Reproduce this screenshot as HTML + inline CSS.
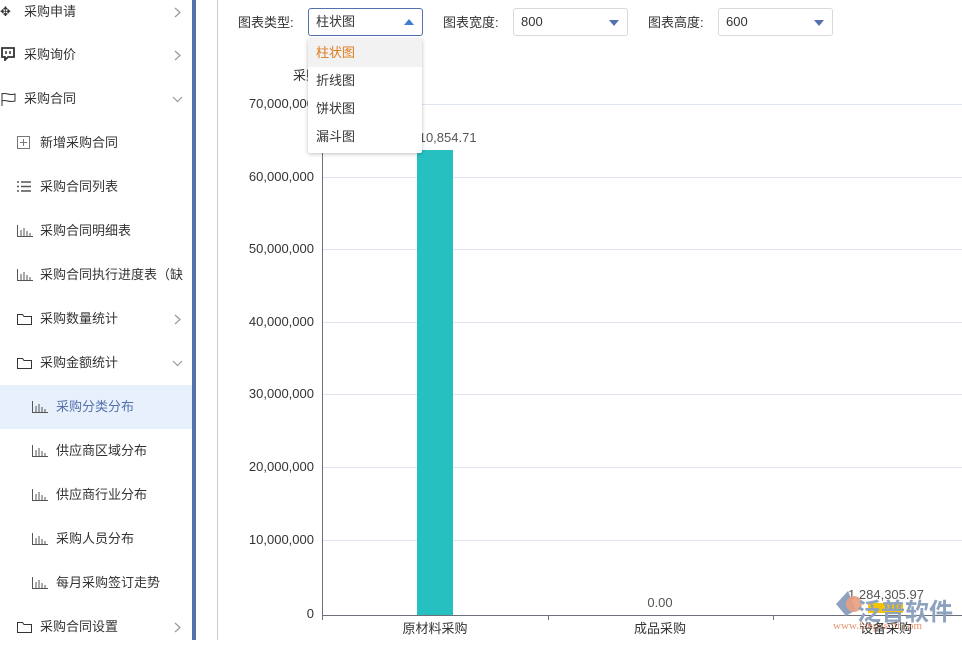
<!DOCTYPE html>
<html><head><meta charset="utf-8"><style>
*{margin:0;padding:0;box-sizing:border-box}
body{width:962px;height:640px;overflow:hidden;background:#fff;font-family:"Liberation Sans","Noto Sans CJK SC",sans-serif;font-size:13px;color:#333;position:relative}
.side{position:absolute;left:0;top:0;width:192px;height:640px;background:#fff}
.bar{position:absolute;left:192px;top:0;width:4px;height:640px;background:#5470ad}
.vline{position:absolute;left:217px;top:0;width:1px;height:640px;background:#c8ccd4}
.it{position:absolute;left:0;width:192px;height:44px;line-height:44px;color:#333;font-size:13px}
.it .ic{position:absolute;top:0}
.it .t{position:absolute;top:0}
.arr{position:absolute;left:174px;top:17px}
.dn{position:absolute;left:172px;top:19px}
.act{background:#e8f0fc;color:#5470ad}
.lab{position:absolute;top:12px;font-size:13px;color:#333}
.sel{position:absolute;top:8px;height:28px;border:1px solid #d9d9d9;border-radius:3px;padding-left:7px;line-height:26px;font-size:13px}
.sel .tri{position:absolute;right:8px;top:11px;width:0;height:0;border-left:5px solid transparent;border-right:5px solid transparent;border-top:6px solid #5470ad}
.dd{position:absolute;left:308px;top:39px;width:114px;height:114px;background:#fff;box-shadow:0 1px 4px rgba(0,0,0,.25);border-radius:2px}
.dd div{height:28px;line-height:28px;padding-left:8px;font-size:13px}
</style></head><body>
<div class="side">
<div class="it" style="top:-10px"><span class="ic" style="left:0">✥</span><span class="t" style="left:24px">采购申请</span><svg class="arr" width="8" height="11"><path d="M1 1l5 4.5L1 10" fill="none" stroke="#999" stroke-width="1.2"/></svg></div>
<div class="it" style="top:33px"><svg class="ic" style="left:1px;top:14px" width="14" height="14"><path d="M1 1h12v9H7l-3 3v-3H1z" fill="none" stroke="#333" stroke-width="1.8"/><path d="M5 4v3M9 4v3" stroke="#333" stroke-width="1.5"/></svg><span class="t" style="left:24px">采购询价</span><svg class="arr" width="8" height="11"><path d="M1 1l5 4.5L1 10" fill="none" stroke="#999" stroke-width="1.2"/></svg></div>
<div class="it" style="top:77px"><svg class="ic" style="left:1px;top:15px" width="16" height="14"><path d="M1 1v13M1 2c4-2 6 2 13 0v7c-7 2-9-2-13 0" fill="none" stroke="#333"/></svg><span class="t" style="left:24px">采购合同</span><svg class="dn" width="11" height="7"><path d="M1 1l4.5 4.5L10 1" fill="none" stroke="#999" stroke-width="1.2"/></svg></div>
<div class="it" style="top:121px"><svg class="ic" style="left:17px;top:15px" width="14" height="14"><rect x=".5" y=".5" width="12" height="12" fill="none" stroke="#777"/><path d="M3 6.5h7M6.5 3v7" stroke="#777"/></svg><span class="t" style="left:40px">新增采购合同</span></div>
<div class="it" style="top:165px"><svg class="ic" style="left:17px;top:16px" width="14" height="12"><path d="M0 1h2M4 1h10M0 5.5h2M4 5.5h10M0 10h2M4 10h10" stroke="#555" stroke-width="1.5"/></svg><span class="t" style="left:40px">采购合同列表</span></div>
<div class="it" style="top:209px"><svg class="ic" style="left:17px;top:16px" width="16" height="12"><path d="M.5 0v11.5H16M4 11V5M7 11V3M10 11V6M13 11V8" stroke="#555" fill="none"/></svg><span class="t" style="left:40px">采购合同明细表</span></div>
<div class="it" style="top:253px"><svg class="ic" style="left:17px;top:16px" width="16" height="12"><path d="M.5 0v11.5H16M4 11V5M7 11V3M10 11V6M13 11V8" stroke="#555" fill="none"/></svg><span class="t" style="left:40px;white-space:nowrap">采购合同执行进度表（缺</span></div>
<div class="it" style="top:297px"><svg class="ic" style="left:17px;top:15px" width="16" height="14"><path d="M.5 2.5v10h14v-8H7L5.5 2.5z" fill="none" stroke="#333"/></svg><span class="t" style="left:40px">采购数量统计</span><svg class="arr" width="8" height="11"><path d="M1 1l5 4.5L1 10" fill="none" stroke="#999" stroke-width="1.2"/></svg></div>
<div class="it" style="top:341px"><svg class="ic" style="left:17px;top:15px" width="16" height="14"><path d="M.5 2.5v10h14v-8H7L5.5 2.5z" fill="none" stroke="#333"/></svg><span class="t" style="left:40px">采购金额统计</span><svg class="dn" width="11" height="7"><path d="M1 1l4.5 4.5L10 1" fill="none" stroke="#999" stroke-width="1.2"/></svg></div>
<div class="it act" style="top:385px"><svg class="ic" style="left:32px;top:16px" width="16" height="12"><path d="M.5 0v11.5H16M4 11V5M7 11V3M10 11V6M13 11V8" stroke="#555" fill="none"/></svg><span class="t" style="left:56px">采购分类分布</span></div>
<div class="it" style="top:429px"><svg class="ic" style="left:32px;top:16px" width="16" height="12"><path d="M.5 0v11.5H16M4 11V5M7 11V3M10 11V6M13 11V8" stroke="#555" fill="none"/></svg><span class="t" style="left:56px">供应商区域分布</span></div>
<div class="it" style="top:473px"><svg class="ic" style="left:32px;top:16px" width="16" height="12"><path d="M.5 0v11.5H16M4 11V5M7 11V3M10 11V6M13 11V8" stroke="#555" fill="none"/></svg><span class="t" style="left:56px">供应商行业分布</span></div>
<div class="it" style="top:517px"><svg class="ic" style="left:32px;top:16px" width="16" height="12"><path d="M.5 0v11.5H16M4 11V5M7 11V3M10 11V6M13 11V8" stroke="#555" fill="none"/></svg><span class="t" style="left:56px">采购人员分布</span></div>
<div class="it" style="top:561px"><svg class="ic" style="left:32px;top:16px" width="16" height="12"><path d="M.5 0v11.5H16M4 11V5M7 11V3M10 11V6M13 11V8" stroke="#555" fill="none"/></svg><span class="t" style="left:56px">每月采购签订走势</span></div>
<div class="it" style="top:605px"><svg class="ic" style="left:17px;top:15px" width="16" height="14"><path d="M.5 2.5v10h14v-8H7L5.5 2.5z" fill="none" stroke="#333"/></svg><span class="t" style="left:40px">采购合同设置</span><svg class="arr" width="8" height="11"><path d="M1 1l5 4.5L1 10" fill="none" stroke="#999" stroke-width="1.2"/></svg></div>
</div>
<div class="bar"></div><div class="vline"></div>

<div class="lab" style="left:238px">图表类型:</div>
<div class="sel" style="left:308px;width:115px;border-color:#5470ad">柱状图<span class="tri" style="border-top:none;border-bottom:6px solid #3f7fd0;top:10px"></span></div>
<div class="lab" style="left:443px">图表宽度:</div>
<div class="sel" style="left:513px;width:115px">800<span class="tri"></span></div>
<div class="lab" style="left:648px">图表高度:</div>
<div class="sel" style="left:718px;width:115px">600<span class="tri"></span></div>

<svg style="position:absolute;left:0;top:0" width="962" height="640" font-family="Liberation Sans,Noto Sans CJK SC,sans-serif" font-size="13" fill="#333">
<g stroke="#e0e6f1">
<line x1="322" x2="962" y1="104.5" y2="104.5"/><line x1="322" x2="962" y1="177.5" y2="177.5"/><line x1="322" x2="962" y1="249.5" y2="249.5"/><line x1="322" x2="962" y1="322.5" y2="322.5"/><line x1="322" x2="962" y1="394.5" y2="394.5"/><line x1="322" x2="962" y1="467.5" y2="467.5"/><line x1="322" x2="962" y1="540.5" y2="540.5"/>
</g>
<line x1="322.5" y1="104" x2="322.5" y2="615" stroke="#6e7079"/>
<line x1="322" y1="615.5" x2="962" y2="615.5" stroke="#6e7079"/>
<g stroke="#6e7079"><line x1="322.5" x2="322.5" y1="615" y2="620"/><line x1="548.5" x2="548.5" y1="615" y2="620"/><line x1="773.5" x2="773.5" y1="615" y2="620"/></g>
<g text-anchor="end"><text x="314" y="108">70,000,000</text><text x="314" y="181">60,000,000</text><text x="314" y="253">50,000,000</text><text x="314" y="326">40,000,000</text><text x="314" y="398">30,000,000</text><text x="314" y="471">20,000,000</text><text x="314" y="544">10,000,000</text><text x="314" y="618">0</text></g>
<text x="293" y="80">采购</text>
<rect x="417" y="150" width="36" height="465" fill="#26c0c0"/>
<g fill="#555" text-anchor="middle"><text x="435" y="142">63,610,854.71</text><text x="660" y="607">0.00</text><text x="886" y="599">1,284,305.97</text></g>
<path d="M848 591l-12 13 10 12 10-6z" fill="#8ea2c0"/><circle cx="854" cy="604" r="8" fill="#e8a080" opacity=".9"/>
<rect x="868" y="603" width="35" height="10" fill="#f5c400"/>
<text x="857" y="620" font-size="24" fill="#8ea2c0" font-weight="bold" font-family="Noto Sans CJK SC,sans-serif">泛普软件</text>
<text x="833" y="629" font-size="11" fill="#e89070" font-family="Liberation Serif,serif">www.fanpusoft.com</text>
<g text-anchor="middle" fill="#333"><text x="435" y="633">原材料采购</text><text x="660" y="633">成品采购</text><text x="886" y="633">设备采购</text></g>
</svg>

<div class="dd">
<div style="background:#f2f2f2;color:#e07b1c">柱状图</div><div>折线图</div><div>饼状图</div><div>漏斗图</div>
</div>
</body></html>
